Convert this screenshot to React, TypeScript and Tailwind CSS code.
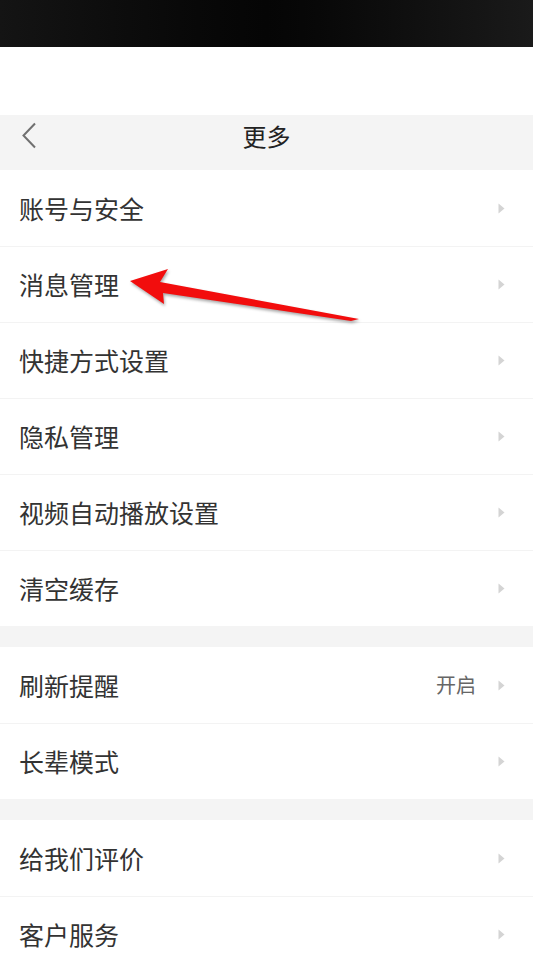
type Row = { label: string; value?: string };

const groups: Row[][] = [
  [
    { label: "账号与安全" },
    { label: "消息管理" },
    { label: "快捷方式设置" },
    { label: "隐私管理" },
    { label: "视频自动播放设置" },
    { label: "清空缓存" },
  ],
  [{ label: "刷新提醒", value: "开启" }, { label: "长辈模式" }],
  [{ label: "给我们评价" }, { label: "客户服务" }],
];

function Caret() {
  return (
    <svg width="7" height="11" viewBox="0 0 7 11" className="shrink-0">
      <path d="M0.5 0.5 L6.5 5.5 L0.5 10.5 Z" fill="#d4d4d4" />
    </svg>
  );
}

function Arrow() {
  return (
    <svg
      width="533"
      height="80"
      viewBox="0 250 533 80"
      className="pointer-events-none absolute left-0 top-[250px] drop-shadow-[1px_2px_1.5px_rgba(0,0,0,0.35)]"
    >
      <polygon
        points="130,281 168,269 160,282 359,319 351,321 163,293 164,304"
        fill="#f20d0d"
      />
    </svg>
  );
}

export default function App() {
  return (
    <div
      className="relative min-h-[967px] w-[533px] overflow-hidden bg-white"
      style={{ fontFamily: '"Noto Sans CJK SC", "Noto Sans", sans-serif' }}
    >
      <div className="h-[47px] bg-gradient-to-r from-[#141414] via-[#050505] to-[#1a1a1a]" />
      <div className="h-[68px] bg-white" />

      <div className="relative flex h-[55px] items-center justify-center bg-[#f4f4f4] pb-[14px]">
        <svg width="16" height="28" viewBox="0 0 16 28" className="absolute left-[21px] top-[7px]">
          <polyline points="14,1.5 2.5,13.5 14,25.5" fill="none" stroke="#707070" strokeWidth="2" />
        </svg>
        <span className="text-[24px] leading-none text-[#222]">更多</span>
      </div>

      {groups.map((g, gi) => (
        <div key={gi}>
          {gi > 0 && <div className="h-[21px] bg-[#f4f4f4]" />}
          {g.map((r, i) => (
            <div
              key={r.label}
              className={`flex h-[76px] items-center pl-[19px] pr-[28px] ${
                i > 0 ? "border-t border-[#f3f3f3]" : ""
              }`}
            >
              <span className="flex-1 text-[25px] leading-none text-[#333]">{r.label}</span>
              {r.value && (
                <span className="mr-[22px] text-[20px] leading-none text-[#666]">{r.value}</span>
              )}
              <Caret />
            </div>
          ))}
        </div>
      ))}

      <Arrow />
    </div>
  );
}
